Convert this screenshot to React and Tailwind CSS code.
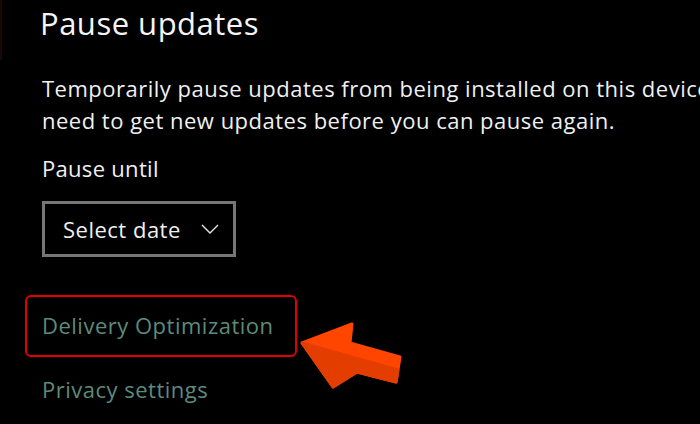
import React from 'react';

const Chevron = () => (
  <svg width="18" height="10" viewBox="0 0 18 10" fill="none" className="shrink-0">
    <polyline points="1,1 9,9 17,1" stroke="#e5e5e5" strokeWidth="1.4" />
  </svg>
);

const Arrow = () => (
  <svg width="120" height="80" viewBox="0 0 120 80" className="absolute left-[290px] top-[315px]">
    <polygon
      points="12,28 62,9 60,28 110,42 106,67 67,57 43,72"
      fill="#ff4500"
      stroke="#ff4500"
      strokeWidth="3"
      strokeLinejoin="round"
    />
    <polygon
      points="12,28 108,55 106,67 67,57 43,72"
      fill="#e43d00"
      stroke="#e43d00"
      strokeWidth="3"
      strokeLinejoin="round"
    />
  </svg>
);

export default function App() {
  return (
    <div className="relative w-[700px] h-[424px] overflow-hidden bg-black text-white font-['Open_Sans',sans-serif]">
      <div className="absolute left-0 top-0 h-[60px] w-[2px] bg-[#1c0707]" />
      <div className="flex flex-col items-start pl-[42px] pt-[4px]">
        <h1 className="-ml-[2px] text-[31px] leading-[38px] tracking-[0.5px] font-normal text-[#f5f5f5]">Pause updates</h1>

        {/* description, runs past the right edge */}
        <div className="mt-[30px] w-full overflow-hidden text-[22px] leading-[32px] tracking-[0.5px] text-[#f0f0f0] whitespace-nowrap">
          <p>Temporarily pause updates from being installed on this device for up to 35 days. When you reach the pause limit, your device will</p>
          <p>need to get new updates before you can pause again.</p>
        </div>

        <p className="mt-[17px] text-[22px] leading-[30px] tracking-[0.3px] text-[#f0f0f0]">Pause until</p>

        <button className="mt-[18px] flex h-[56px] items-center gap-[20px] border-[3px] border-[#767676] pl-[18px] pr-[14px] text-[22px] tracking-[0.5px] text-[#f0f0f0]">
          <span>Select date</span>
          <Chevron />
        </button>

        <div className="mt-[38px] -ml-[17px] rounded-[6px] border-2 border-[#e00000] pl-[15px] pr-[21px] pt-[13px] pb-[15px]">
          <p className="text-[22px] leading-[30px] tracking-[0.5px] text-[#5e8a7b]">Delivery Optimization</p>
        </div>

        <p className="mt-[17px] text-[22px] leading-[30px] tracking-[0.5px] text-[#5e8a7b]">Privacy settings</p>
      </div>
      <Arrow />
    </div>
  );
}
